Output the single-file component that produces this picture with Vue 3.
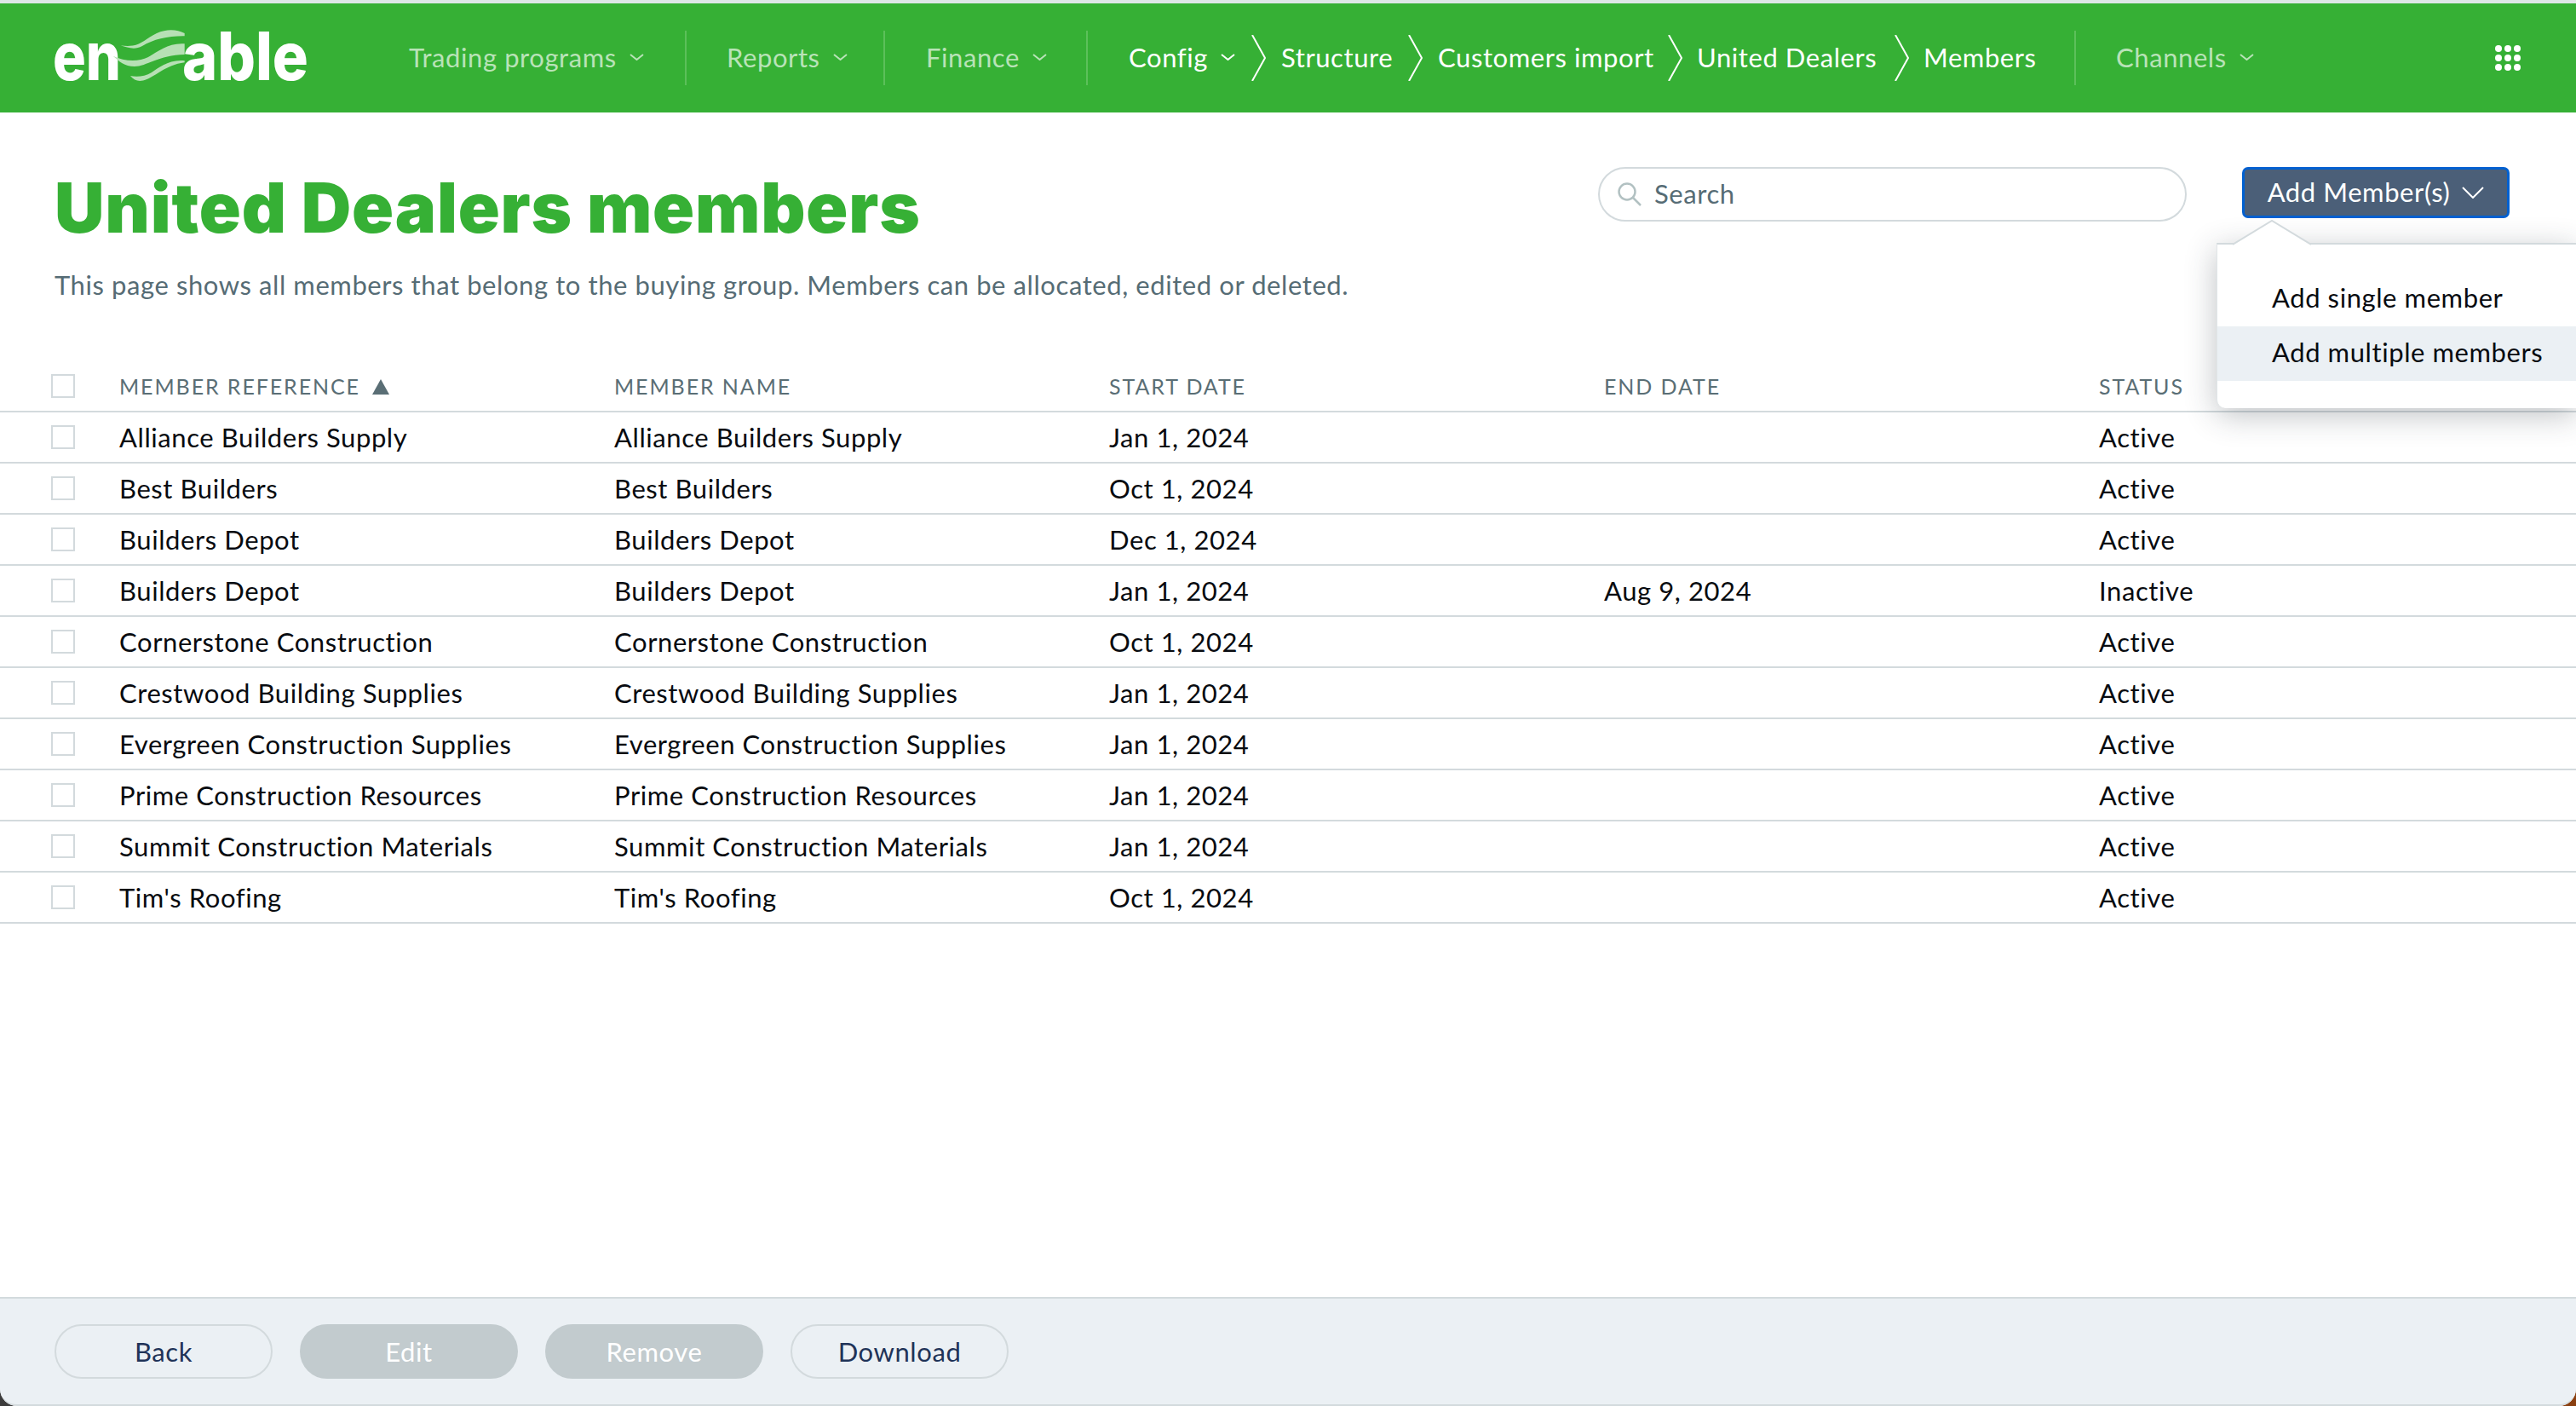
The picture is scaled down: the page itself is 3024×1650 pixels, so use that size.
<script setup>
const rows = [
  ['Alliance Builders Supply', 'Jan 1, 2024', '', 'Active'],
  ['Best Builders', 'Oct 1, 2024', '', 'Active'],
  ['Builders Depot', 'Dec 1, 2024', '', 'Active'],
  ['Builders Depot', 'Jan 1, 2024', 'Aug 9, 2024', 'Inactive'],
  ['Cornerstone Construction', 'Oct 1, 2024', '', 'Active'],
  ['Crestwood Building Supplies', 'Jan 1, 2024', '', 'Active'],
  ['Evergreen Construction Supplies', 'Jan 1, 2024', '', 'Active'],
  ['Prime Construction Resources', 'Jan 1, 2024', '', 'Active'],
  ['Summit Construction Materials', 'Jan 1, 2024', '', 'Active'],
  ["Tim's Roofing", 'Oct 1, 2024', '', 'Active'],
]
const dots = [0, 1, 2, 3, 4, 5, 6, 7, 8]
</script>

<template>
  <div class="desk">
    <div class="window">
      <header class="topbar">
        <svg class="logo" viewBox="40 10 340 110" width="340" height="110" role="img" aria-label="enable">
          <text x="62" y="90" class="logo-text" textLength="80" lengthAdjust="spacingAndGlyphs">en</text>
          <text x="214" y="90" class="logo-text" textLength="148" lengthAdjust="spacingAndGlyphs">able</text>
          <g fill="#b7e0b5">
            <path d="M141.700 49.300C150 52 158 55 167 50C180 42 198 38 216.700 38.300L216.700 35C208 30.500 196 29.500 184 35C172 41 166 48 156 49.500C150 50.300 146 49.800 141.700 49.300Z" />
            <path d="M132.700 61.700C140 68 146 74 158 74C172 74 186 60.500 216.700 60L216.700 47.300C198 46 186 56 174 63C162 69 146 68 132.700 61.700Z" />
            <path d="M153 85C157 90 162 92 168 90.500C182 87 194 72 216.700 69.300L216.700 67.300C198 65.500 186 76 178 81C170 86 160 86.500 153 85Z" />
          </g>
        </svg>
        <nav class="nav">
          <a class="item pale">Trading programs<svg class="caret" viewBox="0 0 17 8"><path d="M1 1l7.500 6 7.500-6" /></svg></a>
          <i class="divider"></i>
          <a class="item pale">Reports<svg class="caret" viewBox="0 0 17 8"><path d="M1 1l7.500 6 7.500-6" /></svg></a>
          <i class="divider"></i>
          <a class="item pale">Finance<svg class="caret" viewBox="0 0 17 8"><path d="M1 1l7.500 6 7.500-6" /></svg></a>
          <i class="divider"></i>
          <a class="item">Config<svg class="caret" viewBox="0 0 17 8"><path d="M1 1l7.500 6 7.500-6" /></svg></a>
          <svg class="crumb" viewBox="0 0 17 54"><path d="M1 0l15 27L1 54" /></svg>
          <a class="item">Structure</a>
          <svg class="crumb" viewBox="0 0 17 54"><path d="M1 0l15 27L1 54" /></svg>
          <a class="item">Customers import</a>
          <svg class="crumb" viewBox="0 0 17 54"><path d="M1 0l15 27L1 54" /></svg>
          <a class="item">United Dealers</a>
          <svg class="crumb" viewBox="0 0 17 54"><path d="M1 0l15 27L1 54" /></svg>
          <a class="item">Members</a>
          <i class="divider"></i>
          <a class="item pale">Channels<svg class="caret" viewBox="0 0 17 8"><path d="M1 1l7.500 6 7.500-6" /></svg></a>
        </nav>
        <div class="apps"><i v-for="d in dots" :key="d"></i></div>
      </header>

      <main class="main">
        <section class="head">
          <div class="intro">
            <h1>United Dealers members</h1>
            <p>This page shows all members that belong to the buying group. Members can be allocated, edited or deleted.</p>
          </div>
          <div class="search">
            <svg viewBox="0 0 30 30" width="30" height="30"><circle cx="12" cy="12" r="9.500" /><path d="M19 19l9 9" /></svg>
            <span>Search</span>
          </div>
          <button class="add"><span>Add Member(s)</span><svg viewBox="0 0 26 14" width="26" height="14"><path d="M1 1l12 12L25 1" /></svg></button>
        </section>

        <div class="menu">
          <svg class="tip" viewBox="0 0 92 30" width="92" height="30"><path d="M0 29L46 1l46 28" /></svg>
          <div class="menu-item">Add single member</div>
          <div class="menu-item hot">Add multiple members</div>
        </div>

        <section class="table">
          <div class="row hdr">
            <span class="check"></span>
            <span>MEMBER REFERENCE<i class="sort"></i></span>
            <span>MEMBER NAME</span>
            <span>START DATE</span>
            <span>END DATE</span>
            <span>STATUS</span>
          </div>
          <div v-for="(r, i) in rows" :key="i" class="row">
            <span class="check"></span>
            <span>{{ r[0] }}</span>
            <span>{{ r[0] }}</span>
            <span>{{ r[1] }}</span>
            <span>{{ r[2] }}</span>
            <span>{{ r[3] }}</span>
          </div>
        </section>
      </main>

      <footer class="foot">
        <button class="pill">Back</button>
        <button class="pill off">Edit</button>
        <button class="pill off">Remove</button>
        <button class="pill">Download</button>
      </footer>
    </div>
  </div>
</template>

<style>
html, body { margin: 0; padding: 0; }
</style>

<style scoped>
.desk {
  width: 3024px;
  height: 1650px;
  background: linear-gradient(to right, #3c3c3c 0, #3c3c3c 50%, #8a3f10 50%, #8a3f10 100%);
  font-family: "Lato", "Open Sans", sans-serif;
  font-size: 31px;
  letter-spacing: 0.58px;
  color: #080b10;
}
.window {
  width: 3024px;
  height: 1650px;
  box-sizing: border-box;
  display: flex;
  flex-direction: column;
  background: #fff;
  border-top: 4px solid #dde7e6;
  border-radius: 0 0 20px 20px;
  overflow: hidden;
  position: relative;
}
.topbar {
  height: 128px;
  flex: none;
  display: flex;
  align-items: center;
  padding-left: 40px;
  background: #36b035;
  color: #fff;
}
.logo { flex: none; margin-right: 100px; position: relative; top: 1px; }
.logo-text {
  font-family: "Inter", sans-serif;
  font-weight: 800;
  font-size: 78px;
  letter-spacing: 0;
  fill: #fff;
}
.nav {
  display: grid;
  grid-template-columns: 324px 49px 184px 50px 188px 50px 144px 35px 149px 35px 270px 34px 232px 34px 177px 49px 300px;
  align-items: center;
  height: 64px;
}
.item { display: flex; align-items: center; white-space: nowrap; padding-bottom: 3px; }
.pale { color: #b9e3b8; }
.caret {
  width: 17px;
  height: 8px;
  margin-left: 15px;
  fill: none;
  stroke: currentColor;
  stroke-width: 2;
}
.divider { display: block; width: 2px; height: 64px; background: #5cc05a; }
.crumb { width: 17px; height: 54px; fill: none; stroke: #fff; stroke-width: 2; }
.apps {
  margin-left: auto;
  margin-right: 65px;
  display: grid;
  grid-template-columns: repeat(3, 8px);
  gap: 3px;
}
.apps i { width: 8px; height: 8px; border-radius: 50%; background: #fff; display: block; }

.main { flex: 1; position: relative; }
.head {
  display: flex;
  align-items: flex-start;
  padding: 64px 78px 0 64px;
  height: 222px;
  box-sizing: border-box;
  margin-bottom: 70px;
}
.intro { flex: 1; min-width: 0; }
h1 {
  margin: 0;
  font-family: "Inter", sans-serif;
  font-size: 81px;
  line-height: 96px;
  font-weight: 900;
  letter-spacing: 0.800px;
  white-space: nowrap;
  color: #36b035;
}
.intro p {
  margin: 24px 0 0;
  line-height: 36px;
  color: #566c75;
  white-space: nowrap;
}
.search {
  flex: none;
  width: 691px;
  height: 64px;
  box-sizing: border-box;
  border: 2px solid #d3dadd;
  border-radius: 32px;
  display: flex;
  align-items: center;
  gap: 14px;
  padding: 0 0 1px 20px;
  color: #566c75;
  margin-right: 65px;
}
.search span { padding-bottom: 2px; }
.search svg { fill: none; stroke: #b2c1c2; stroke-width: 2.500; }
.add {
  flex: none;
  width: 314px;
  height: 60px;
  box-sizing: border-box;
  border: 3px solid #0060d0;
  border-radius: 7px;
  background: #4b5f78;
  color: #fff;
  font: inherit;
  letter-spacing: inherit;
  display: flex;
  align-items: center;
  justify-content: center;
  gap: 14px;
  padding: 0;
}
.add span { padding-bottom: 2px; }
.add svg { fill: none; stroke: #fff; stroke-width: 2; }

.menu {
  position: absolute;
  z-index: 2;
  top: 153px;
  left: 2602px;
  right: 0;
  box-sizing: border-box;
  padding: 32px 0;
  background: #fff;
  border-top: 2px solid #d3dadd;
  border-left: 1px solid #e0e5e7;
  border-radius: 0 0 0 10px;
  box-shadow: 0 8px 36px rgba(40, 50, 60, 0.3);
}
.tip {
  position: absolute;
  left: 18px;
  top: -29px;
  fill: #fff;
  stroke: #d3dadd;
  stroke-width: 2;
}
.menu-item {
  height: 64px;
  line-height: 60px;
  padding-left: 64px;
  white-space: nowrap;
}
.hot { background: #ebf0f4; }

.table { position: relative; }
.row {
  display: grid;
  grid-template-columns: 140px 581px 581px 581px 581px 1fr;
  align-items: center;
  height: 60px;
  box-sizing: border-box;
  border-bottom: 2px solid #d3dadd;
}
.hdr {
  color: #5a6e75;
  font-size: 25px;
  letter-spacing: 1.900px;
}
.check {
  display: block;
  width: 28px;
  height: 28px;
  box-sizing: border-box;
  margin-left: 60px;
  border: 2px solid #d3dadd;
}
.sort {
  display: inline-block;
  margin-left: 14px;
  border-left: 10px solid transparent;
  border-right: 10px solid transparent;
  border-bottom: 18px solid #5a6e75;
}

.foot {
  flex: none;
  height: 128px;
  box-sizing: border-box;
  display: flex;
  gap: 32px;
  padding: 30px 64px 0;
  background: #ebf0f4;
  border-top: 2px solid #d3dadd;
  border-bottom: 2px solid #d3dadd;
  border-radius: 0 0 20px 20px;
}
.pill {
  width: 256px;
  height: 64px;
  box-sizing: border-box;
  border: 2px solid #d3dadd;
  border-radius: 32px;
  background: transparent;
  color: #1f3358;
  font: inherit;
  letter-spacing: inherit;
  padding: 0 0 1px;
}
.off {
  background: #c2cbce;
  border-color: #c2cbce;
  color: #fff;
}
</style>
